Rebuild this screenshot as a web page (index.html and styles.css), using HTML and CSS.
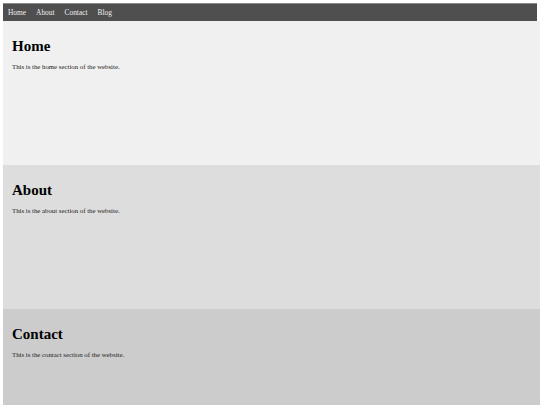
FILE: index.html
```html
<!DOCTYPE html>
<html lang="en">
<head>
    <meta charset="UTF-8">
    <meta name="viewport" content="width=device-width, initial-scale=1.0">
    <title>My Website</title>
    <link rel="stylesheet" href="styles.css">
</head>
<body>

<nav class="navbar">
    <a href="#home">Home</a>
    <a href="#about">About</a>
    <a href="#contact">Contact</a>
    <a href="#blog">Blog</a>
</nav>

<section id="home" class="section home">
    <h1>Home</h1>
    <p>This is the home section of the website.</p>
</section>

<section id="about" class="section about">
    <h1>About</h1>
    <p>This is the about section of the website.</p>
</section>

<section id="contact" class="section contact">
    <h1>Contact</h1>
    <p>This is the contact section of the website.</p>
</section>

</body>
</html>
```

FILE: styles.css
```css
html {
    overflow: hidden;
}
body {
    font-family: "Liberation Serif", serif;
    margin: 3px 0 0 3px;
    background-color: #fff;
}
.navbar {
    display: flex;
    gap: 10px;
    align-items: center;
    height: 18px;
    padding: 0 5px;
    margin-right: 3px;
    background-color: #4f4f4f;
    border-top: 1px solid #8a8a8a;
    box-sizing: border-box;
}
.navbar a {
    color: #eee;
    text-decoration: none;
    font-size: 7.4px;
}
.section {
    height: 144px;
    padding: 10px 9px;
    box-sizing: border-box;
}
.section h1 {
    font-size: 15px;
    margin: 7px 0 8px;
}
.section p {
    font-size: 6.8px;
    margin: 0;
    color: #222;
}
.home {
    background-color: #f0f0f0;
}
.about {
    background-color: #dddddd;
}
.contact {
    background-color: #cccccc;
}
```
